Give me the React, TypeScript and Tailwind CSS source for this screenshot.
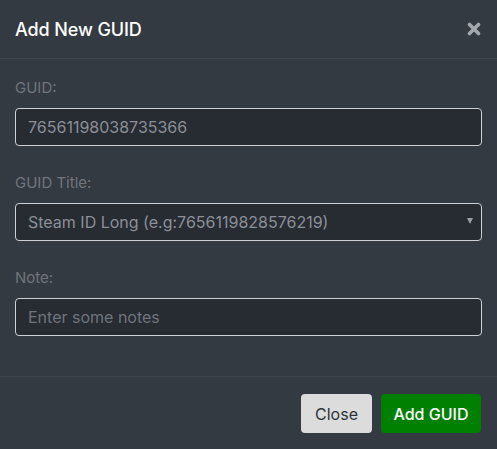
import React, { useState } from 'react';

const fieldClass =
  'w-full h-[38px] px-3 rounded-[4px] border border-[#cdd0d4] bg-[#272b32] text-[16px] text-[#8b9098] placeholder-[#6f757d] outline-none';

export default function App() {
  const [guid, setGuid] = useState('76561198038735366');
  const [title, setTitle] = useState('long');
  const [note, setNote] = useState('');

  return (
    <div
      className="w-[497px] h-[449px] bg-[#343a41] flex flex-col"
      style={{ fontFamily: 'Inter, "Noto Sans", sans-serif' }}
    >
      {/* Header */}
      <div className="h-[59px] flex items-center justify-between px-[15px] border-b border-[#3f454d]">
        <h5 className="text-[18px] font-medium text-white tracking-[-0.1px]">Add New GUID</h5>
        <button type="button" className="text-[#a3a8ae] mr-[1px]">
          <svg width="14" height="14" viewBox="0 0 14 14">
            <path d="M2.5 2.5 L11.5 11.5 M11.5 2.5 L2.5 11.5" stroke="currentColor" strokeWidth="3.6" strokeLinecap="round" />
          </svg>
        </button>
      </div>

      {/* Body */}
      <div className="px-[15px] pt-[17px] pb-[15px] border-b border-[#3f454d]">
        <div className="mb-[25px]">
          <label className="block text-[15px] leading-6 text-[#6f757d] mb-2">GUID:</label>
          <input className={fieldClass} value={guid} onChange={e => setGuid(e.target.value)} />
        </div>

        <div className="mb-[25px]">
          <label className="block text-[15px] leading-6 text-[#6f757d] mb-2">GUID Title:</label>
          <div className="relative">
            <select
              className={`${fieldClass} appearance-none`}
              value={title}
              onChange={e => setTitle(e.target.value)}
            >
              <option value="long">Steam ID Long (e.g:7656119828576219)</option>
              <option value="short">Steam ID Short</option>
            </select>
            <span className="absolute right-[9px] top-[15px] w-0 h-0 border-l-[3px] border-r-[3px] border-t-[6px] border-l-transparent border-r-transparent border-t-[#9ba0a7]" />
          </div>
        </div>

        <div className="mb-[25px]">
          <label className="block text-[15px] leading-6 text-[#6f757d] mb-2">Note:</label>
          <input
            className={fieldClass}
            placeholder="Enter some notes"
            value={note}
            onChange={e => setNote(e.target.value)}
          />
        </div>
      </div>

      {/* Footer */}
      <div className="flex justify-end items-center gap-[9px] px-[16px] pt-[17px]">
        <button type="button" className="w-[71px] h-[39px] rounded-[4px] bg-[#dcdcdc] text-[#2e3238] text-[16px]">
          Close
        </button>
        <button type="button" className="w-[100px] h-[39px] rounded-[4px] bg-[#008000] text-white text-[16px] font-medium">
          Add GUID
        </button>
      </div>
    </div>
  );
}
